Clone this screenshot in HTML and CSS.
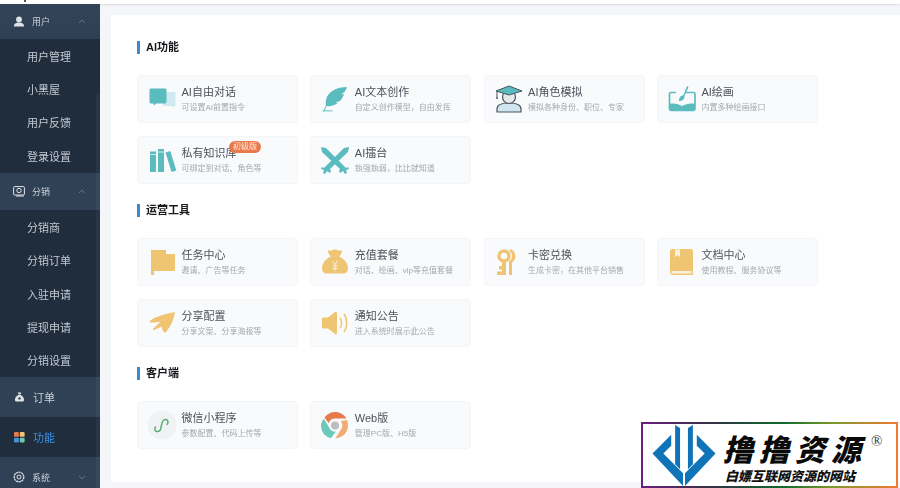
FILE: index.html
```html
<!DOCTYPE html>
<html lang="zh-CN">
<head>
<meta charset="utf-8">
<title>功能</title>
<link rel="stylesheet" href="styles.css">
</head>
<body>
<div class="app">
  <aside class="sidebar">
    <div class="side-top"><span class="top-mark"></span></div>
    <div class="menu-head clip">
      <svg class="head-ico" viewBox="0 0 12 12"><circle cx="6" cy="3.4" r="2.9" fill="#dfe3e8"/><path d="M.8 10.5c0-2.6 2-4 5.2-4s5.200 1.400 5.200 4z" fill="#dfe3e8"/></svg>
      <span class="head-label">用户</span>
      <svg class="caret" viewBox="0 0 8 5"><path d="M1 4l3-3 3 3" fill="none" stroke="#71808f" stroke-width=".8"/></svg>
    </div>
    <a class="sub">用户管理</a>
    <a class="sub">小黑屋</a>
    <a class="sub">用户反馈</a>
    <a class="sub">登录设置</a>
    <div class="menu-head">
      <svg class="head-ico" viewBox="0 0 12 12"><rect x=".6" y="1.600" width="10.800" height="8.400" rx="1" fill="none" stroke="#dfe3e8" stroke-width="1"/><circle cx="6" cy="5.500" r="2.200" fill="none" stroke="#dfe3e8" stroke-width="1"/><path d="M3 11h8" stroke="#dfe3e8"/></svg>
      <span class="head-label">分销</span>
      <svg class="caret" viewBox="0 0 8 5"><path d="M1 4l3-3 3 3" fill="none" stroke="#71808f" stroke-width=".8"/></svg>
    </div>
    <a class="sub">分销商</a>
    <a class="sub">分销订单</a>
    <a class="sub">入驻申请</a>
    <a class="sub">提现申请</a>
    <a class="sub">分销设置</a>
    <div class="menu-row">
      <svg class="row-ico" viewBox="0 0 12 12"><path d="M4 1h4L7 3.200H5z" fill="#dfe3e8"/><path d="M4.600 3.800h2.800C9.500 5 11 7 11 9c0 1.500-1 2-2 2H3c-1 0-2-.5-2-2 0-2 1.500-4 3.600-5.200z" fill="#dfe3e8"/><circle cx="6" cy="7.500" r="1.300" fill="#304156"/></svg>
      <span>订单</span>
    </div>
    <div class="menu-row active">
      <svg class="row-ico" viewBox="0 0 12 12"><rect x="0" y=".5" width="5.300" height="5.300" rx="1" fill="#e8794a"/><rect x="6.300" y=".5" width="5.300" height="5.300" rx="1" fill="#efc574"/><rect x="0" y="6.700" width="5.300" height="5.300" rx="1" fill="#4a90d9"/><rect x="6.300" y="6.700" width="5.300" height="5.300" rx="1" fill="#6cc8a8"/></svg>
      <span>功能</span>
    </div>
    <div class="menu-head last">
      <svg class="head-ico" viewBox="0 0 12 12"><circle cx="6" cy="6" r="4.800" fill="none" stroke="#dfe3e8" stroke-width="1.300" stroke-dasharray="2.200 .5"/><circle cx="6" cy="6" r="2" fill="none" stroke="#dfe3e8"/></svg>
      <span class="head-label">系统</span>
      <svg class="caret" viewBox="0 0 8 5"><path d="M1 1l3 3 3-3" fill="none" stroke="#71808f" stroke-width=".8"/></svg>
    </div>
    <div class="scroll-thumb"></div>
  </aside>

  <div class="main">
    <div class="topbar"></div>
    <main class="panel">
      <section class="group">
        <h2 class="group-title">AI功能</h2>
        <div class="cards">
          <div class="card">
            <svg class="ico" viewBox="0 0 30 30"><path d="M16 8h12.500v14H27l-1 1.500-1.500-1.500H16z" fill="#cfeaf0"/><path d="M4 4.500h14c.8 0 1.500.7 1.500 1.500v12c0 .8-.7 1.500-1.500 1.500H9L7.500 21.500 6 19.500H4c-.8 0-1.500-.7-1.500-1.500V6c0-.8.700-1.500 1.500-1.500z" fill="#5bbcc0"/></svg>
            <div class="txt"><div class="t">AI自由对话</div><div class="s">可设置AI前置指令</div></div>
          </div>
          <div class="card">
            <svg class="ico" viewBox="0 0 30 30"><path d="M27 3C17 3 8 7 6 16c-.5 2.500-.3 4.500 0 6 4 .5 9-.5 12-3l-3-.5 5-1.500c2-2 3.500-5 4-7l-3 .5 3.500-2.500C25.500 6.500 26.500 4.500 27 3z" fill="#5bbcc0"/><path d="M2.500 27c3-.3 8-.2 10 0M4 27c2-6 6-11 11-15" stroke="#5bbcc0" fill="none" stroke-width="1"/></svg>
            <div class="txt"><div class="t">AI文本创作</div><div class="s">自定义创作模型，自由发挥</div></div>
          </div>
          <div class="card">
            <svg class="ico" viewBox="0 0 30 30"><path d="M3 28v-3c0-4 4-6 12-6s12 2 12 6v3z" fill="#cfe6f0" stroke="#4a5560" stroke-width="1.200"/><circle cx="15" cy="13" r="6.500" fill="#e6e8ea" stroke="#4a5560" stroke-width="1.200"/><path d="M15 2L2 7l13 4 13-4z" fill="#5bbcc0" stroke="#4a5560" stroke-width="1"/><path d="M3 7v6" stroke="#4a5560"/><circle cx="3" cy="14" r="1" fill="#4a5560"/></svg>
            <div class="txt"><div class="t">AI角色模拟</div><div class="s">模拟各种身份、职位、专家</div></div>
          </div>
          <div class="card">
            <svg class="ico" viewBox="0 0 30 30"><path d="M9 8.500H4c-1 0-1.500.5-1.500 1.500v14c0 1.500 1 2.500 2.500 2.500h20.500c1.500 0 2.500-1 2.500-2.500V10c0-1-.5-1.500-1.500-1.500H19" fill="none" stroke="#5bbcc0" stroke-width="1.700"/><path d="M2.500 20c5-1 9 0 12.500 2 4-2 8-3 13-2v4.500c0 1.300-1 2.200-2.300 2.200H4.800c-1.300 0-2.300-.9-2.300-2.200z" fill="#5bbcc0"/><path d="M20 2l1.500 1-4 9c0 3-2 5-5.500 5 0-3 1-5 4.500-6z" fill="#5bbcc0"/></svg>
            <div class="txt"><div class="t">AI绘画</div><div class="s">内置多种绘画接口</div></div>
          </div>
          <div class="card">
            <svg class="ico" viewBox="0 0 30 30"><path d="M3 6.500h6V27H3zM11 4h6v23h-6z" fill="#5bbcc0"/><path d="M18.500 7.500l4.800-1.500 6 19.500-4.800 1.500z" fill="#5bbcc0"/><path d="M3 9.500h6M11 7h6" stroke="#e8f5f5" stroke-width=".8"/></svg>
            <div class="txt"><div class="t">私有知识库</div><div class="s">可绑定到对话、角色等</div></div>
            <span class="badge">初级版</span>
          </div>
          <div class="card">
            <svg class="ico wide" viewBox="0 0 30 30"><g fill="#5bbcc0"><path d="M1 2l5 1 20 20 2-1 1 2-3 1 1 3-2 1-2-3-3 2-1-2 1-2L2 7z"/><path d="M29 2l-5 1L4 23l-2-1-1 2 3 1-1 3 2 1 2-3 3 2 1-2-1-2L28 7z"/></g></svg>
            <div class="txt"><div class="t">AI擂台</div><div class="s">執强執弱，比比就知道</div></div>
          </div>
        </div>
      </section>

      <section class="group">
        <h2 class="group-title">运营工具</h2>
        <div class="cards">
          <div class="card">
            <svg class="ico" viewBox="0 0 30 30"><path d="M4 3h15v4h9v17H7v4H4z" fill="#efc574"/></svg>
            <div class="txt"><div class="t">任务中心</div><div class="s">邀请、广告等任务</div></div>
          </div>
          <div class="card">
            <svg class="ico" viewBox="0 0 30 30"><path d="M8 3c2 1 3 .8 4 .2 2-1 4-1 6 0 1 .6 2 .8 4-.2 0 3-1 5-3 6.500 5 2 9 6.500 9 12 0 3-2 5-5 5H7c-3 0-5-2-5-5 0-5.500 4-10 9-12C9 8 8 6 8 3z" fill="#efc574"/><path d="M12.500 14l2.500 3.500 2.500-3.500M15 17.500V24M12.500 19h5M12.500 21.500h5" stroke="#fbf2dd" stroke-width="1" fill="none"/></svg>
            <div class="txt"><div class="t">充值套餐</div><div class="s">对话、绘画、vip等充值套餐</div></div>
          </div>
          <div class="card">
            <svg class="ico" viewBox="0 0 30 30"><circle cx="10" cy="9" r="5" fill="none" stroke="#efc574" stroke-width="3.500"/><path d="M8 14h4v14H3v-3.500h5v-2H5V19h3z" fill="#efc574"/><path d="M16 2c3 1 5.500 4 5.500 7s-1.500 5-3.500 6.500V28h-3V14c2-1 3-3 3-5s-1-4-3-5.500z" fill="#efc574"/></svg>
            <div class="txt"><div class="t">卡密兑换</div><div class="s">生成卡密，在其他平台销售</div></div>
          </div>
          <div class="card">
            <svg class="ico" viewBox="0 0 30 30"><path d="M5 2h19c1 0 2 1 2 2v24H6c-1.500 0-3-1-3-3V4c0-1 1-2 2-2z" fill="#efc574"/><path d="M8 2.500h5V10l-2.500-2L8 10z" fill="#fbf2dd"/><path d="M4.500 24h20v2.500h-20z" fill="#fbf2dd"/></svg>
            <div class="txt"><div class="t">文档中心</div><div class="s">使用教程、服务协议等</div></div>
          </div>
          <div class="card">
            <svg class="ico" viewBox="0 0 30 30"><path d="M28 4c-1 7-4 14-9 20-1 .8-2.500.5-3-1l-1.500-4.500-7 3.500c-1.500.5-2-.8-1-1.800l7-6.500-9 1c-2 0-2-2-.5-2.800C10 8 19 6 28 4z" fill="#efc574"/></svg>
            <div class="txt"><div class="t">分享配置</div><div class="s">分享文案、分享海报等</div></div>
          </div>
          <div class="card">
            <svg class="ico" viewBox="0 0 30 30"><path d="M2 11c0-1 .6-1.500 1.500-1.500H8L15 4c1-.7 2 0 2 1v20c0 1-1 1.700-2 1l-7-5.500H3.500C2.600 20.500 2 20 2 19z" fill="#efc574"/><path d="M20 10c2 2.500 2 7.500 0 10M24 6c3.500 4.500 3.500 13.500 0 18" fill="none" stroke="#efc574" stroke-width="1.500"/></svg>
            <div class="txt"><div class="t">通知公告</div><div class="s">进入系统时展示此公告</div></div>
          </div>
        </div>
      </section>

      <section class="group">
        <h2 class="group-title">客户端</h2>
        <div class="cards">
          <div class="card">
            <svg class="ico" viewBox="0 0 30 30"><circle cx="15" cy="15" r="14.500" fill="#f1f2f3"/><path d="M9 16.500c-1.500 1-1.500 3 -.5 4.200s3.200 1.300 4.400-.2c1-1.200 1-3 1.600-5.500s1-4 2.200-5c1.300-1 3.300-.6 4 .8s.2 3-1.200 3.700" fill="none" stroke="#5aaf78" stroke-width="1.500"/></svg>
            <div class="txt"><div class="t">微信小程序</div><div class="s">参数配置、代码上传等</div></div>
          </div>
          <div class="card">
            <svg class="ico" viewBox="0 0 30 30"><path d="M4.500 7.500C7 4 11 2 15 2c5 0 9 2.600 11.400 6.500H15c-3 0-5.500 2-6.200 4.800z" fill="#e8794a"/><path d="M4 8.800l5.500 9.500c1.300 2.500 4 3.800 6.500 3.300L11 28c-6-1-10-6.500-10-12.500C1 13 2.500 10.500 4 8.800z" fill="#6cc8b8"/><path d="M27 10c.7 1.700 1 3.500 1 5.500 0 7-5.500 12.500-12.500 12.700l6-9.700c1.300-2.300 1-5-.8-7.500z" fill="#f0ac78"/><circle cx="15" cy="15.500" r="4" fill="#bdbdbd"/></svg>
            <div class="txt"><div class="t">Web版</div><div class="s">管理PC版、H5版</div></div>
          </div>
        </div>
      </section>
    </main>
  </div>
</div>

<div class="watermark">
  <svg class="wm-logo" viewBox="0 0 66 64"><g fill="#0f73b8"><path d="M1 31L20 12v11l-8 8 20 20v13z"/><path d="M65 31L46 12v11l8 8-20 20v13z"/><path d="M24 2l5 3v42l-5-5zM37 5l5-3v40l-5 5z"/></g></svg>
  <div class="wm-text">
    <div class="wm-name">撸撸资源<sup class="wm-reg">®</sup></div>
    <div class="wm-slogan">白嫖互联网资源的网站</div>
  </div>
</div>
</body>
</html>
```

FILE: styles.css
```css
* { box-sizing: border-box; }
html, body { margin: 0; height: 488px; overflow: hidden; background: #fff; }
body { font-family: "Liberation Sans", "Noto Sans CJK SC", sans-serif; position: relative; }

.app { display: flex; height: 488px; filter: blur(.35px); }

/* Sidebar */
.sidebar { position: relative; width: 100px; flex: none; background: #1f2d3d; display: flex; flex-direction: column; overflow: hidden; }
.side-top { height: 4px; background: #fff; flex: none; position: relative; }
.top-mark { display: block; width: 2px; height: 2px; margin-left: 24px; background: #555; }
.menu-head, .menu-row { display: flex; align-items: center; flex: none; background: #304156; color: #c9d0d8; }
.menu-head { height: 37.500px; padding-left: 13px; font-size: 9px; }
.menu-head.clip { height: 35px; background: linear-gradient(#334358, #2f3f54); }
.menu-head.last { height: 40px; }
.head-ico { width: 12px; height: 12px; flex: none; }
.head-label { margin-left: 7px; flex: 1; }
.caret { width: 8px; height: 5px; margin-right: 14px; flex: none; }
.sub { display: flex; align-items: center; flex: none; height: 33.400px; padding-left: 27px; font-size: 11px; color: #c3cad2; }
.menu-row { height: 40px; padding-left: 14px; gap: 8px; font-size: 11px; }
.row-ico { width: 11px; height: 12px; flex: none; }
.menu-row.active { background: #1f2d3d; color: #3a8ee6; }
.scroll-thumb { position: absolute; right: 0; top: 93px; width: 4px; height: 395px; background: rgba(255, 255, 255, .04); }

/* Main */
.main { flex: 1; min-width: 0; background: #f4f6f9; display: flex; flex-direction: column; }
.topbar { height: 4px; flex: none; background: #fff; box-shadow: 0 1px 2px rgba(0, 0, 0, .1); }
.panel { margin: 11px 0 6px 11px; flex: 1; background: #fff; padding: 26px 0 0 26px; display: flex; flex-direction: column; gap: 20px; }

.group-title { margin: 0 0 21px; height: 13px; line-height: 13px; font-size: 11px; font-weight: 700; color: #17191c; border-left: 3px solid #3f88cf; padding-left: 6px; }
.group { flex: none; }
.cards { display: grid; grid-template-columns: repeat(4, 161px); column-gap: 12.300px; row-gap: 13px; }

.card { position: relative; height: 48px; display: flex; align-items: center; gap: 4.500px; padding-left: 9px; background: #f9fafc; border: 1px solid #f4f5f8; border-radius: 4px; }
.ico { width: 30px; height: 30px; flex: none; }
.txt { display: flex; flex-direction: column; gap: 3px; min-width: 0; padding-bottom: 1px; }
.t { font-size: 11px; line-height: 14px; color: #4d5159; white-space: nowrap; }
.s { font-size: 8px; line-height: 11px; color: #a4a8ae; white-space: nowrap; }
.badge { position: absolute; left: 91px; top: 4px; height: 12px; width: 32px; border-radius: 6px; background: #e8794a; color: #fde9de; font-size: 8px; line-height: 12px; text-align: center; }

/* Watermark overlay */
.watermark { position: absolute; left: 641px; top: 422px; width: 257px; height: 66px; display: flex; align-items: flex-end; gap: 6px; padding: 0 0 0 8px; background: #fff; border: 2px solid; border-image: linear-gradient(90deg, #6a1f7e 0%, #2e3640 30%, #0e6a2c 55%, #7e9a2a 75%, #f07a34 100%) 1; }
.wm-logo { width: 66px; height: 63px; flex: none; }
.wm-text { display: flex; flex-direction: column; gap: 5px; padding-bottom: 4px; }
.wm-name { font-family: "Noto Sans CJK SC", sans-serif; font-size: 30px; line-height: 33px; font-weight: 900; font-style: italic; color: #0a0a0a; letter-spacing: 6px; white-space: nowrap; position: relative; }
.wm-reg { position: absolute; left: 148px; top: 0; font-family: "Liberation Serif", serif; font-size: 15px; font-weight: 400; font-style: normal; line-height: 18px; letter-spacing: 0; color: #333; }
.wm-slogan { font-family: "Noto Sans CJK SC", sans-serif; font-size: 13px; line-height: 12px; font-weight: 900; font-style: italic; color: #111; white-space: nowrap; margin-left: 2px; }
```
